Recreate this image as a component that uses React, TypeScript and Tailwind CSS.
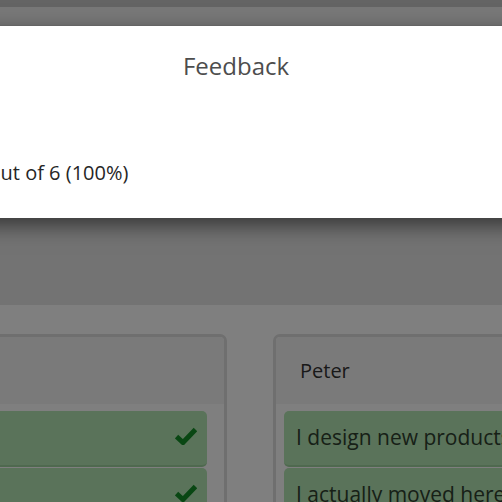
const font = { fontFamily: '"Open Sans", "Liberation Sans", sans-serif' };

function Answer({ text, done }: { text: string; done?: boolean }) {
  return (
    <div className="relative h-[56px] rounded-[5px] bg-[#b4e6b4] border-b-2 border-[#9ed29e] flex items-center pl-[12px] pr-10 text-[21px] text-[#2f402f] whitespace-nowrap overflow-hidden">
      {text}
      {done && (
        <svg
          viewBox="0 0 22 18"
          className="absolute right-[10px] top-[16px] w-[22px] h-[18px]"
        >
          <path d="M1.5 9.5 L8 15.5 L20.5 2.5" fill="none" stroke="#138f26" strokeWidth="5" />
        </svg>
      )}
    </div>
  );
}

function Card({ name, answers }: { name: string; answers: { text: string; done?: boolean }[] }) {
  return (
    <div className="w-[460px] shrink-0 rounded-[7px] border-[3px] border-[#dedede] bg-white overflow-hidden">
      <div className="h-[67px] bg-[#f5f5f5] flex items-center pl-[24px] text-[20px] text-[#333]">
        {name}
      </div>
      <div className="pt-[7px] pl-[8px] pr-[17px] flex flex-col gap-px">
        {answers.map((a, i) => (
          <Answer key={i} text={a.text} done={a.done} />
        ))}
      </div>
    </div>
  );
}

export default function App() {
  return (
    <div className="relative w-[502px] h-[502px] overflow-hidden bg-white" style={font}>
      {/* page behind the dialog */}
      <div className="h-[7px] bg-[#c9c9c9]" />
      <div className="h-[18px] bg-[#f0f0f0]" />
      <div className="h-[280px] bg-[#e6e6e6]" />
      <div className="pt-[29px] flex gap-[46px] -ml-[233px]">
        <Card
          name="Anna"
          answers={[
            { text: "I have two cats", done: true },
            { text: "I grew up by the sea", done: true },
          ]}
        />
        <Card
          name="Peter"
          answers={[
            { text: "I design new products for a living" },
            { text: "I actually moved here last year" },
          ]}
        />
      </div>

      {/* backdrop */}
      <div className="absolute inset-0 bg-black/50" />

      {/* dialog */}
      <div className="absolute top-[26px] -left-[128px] w-[730px] h-[192px] bg-white shadow-[0_7px_20px_rgba(0,0,0,0.55)]">
        <div className="pt-[22px] h-[88px] text-center text-[24px] text-[#4d4d4d] pr-[2px]">
          Feedback
        </div>
        <div className="pl-[24px] pt-[44px] text-[20px] text-[#262626]">
          You got 6 out of 6 (100%)
        </div>
      </div>
    </div>
  );
}
